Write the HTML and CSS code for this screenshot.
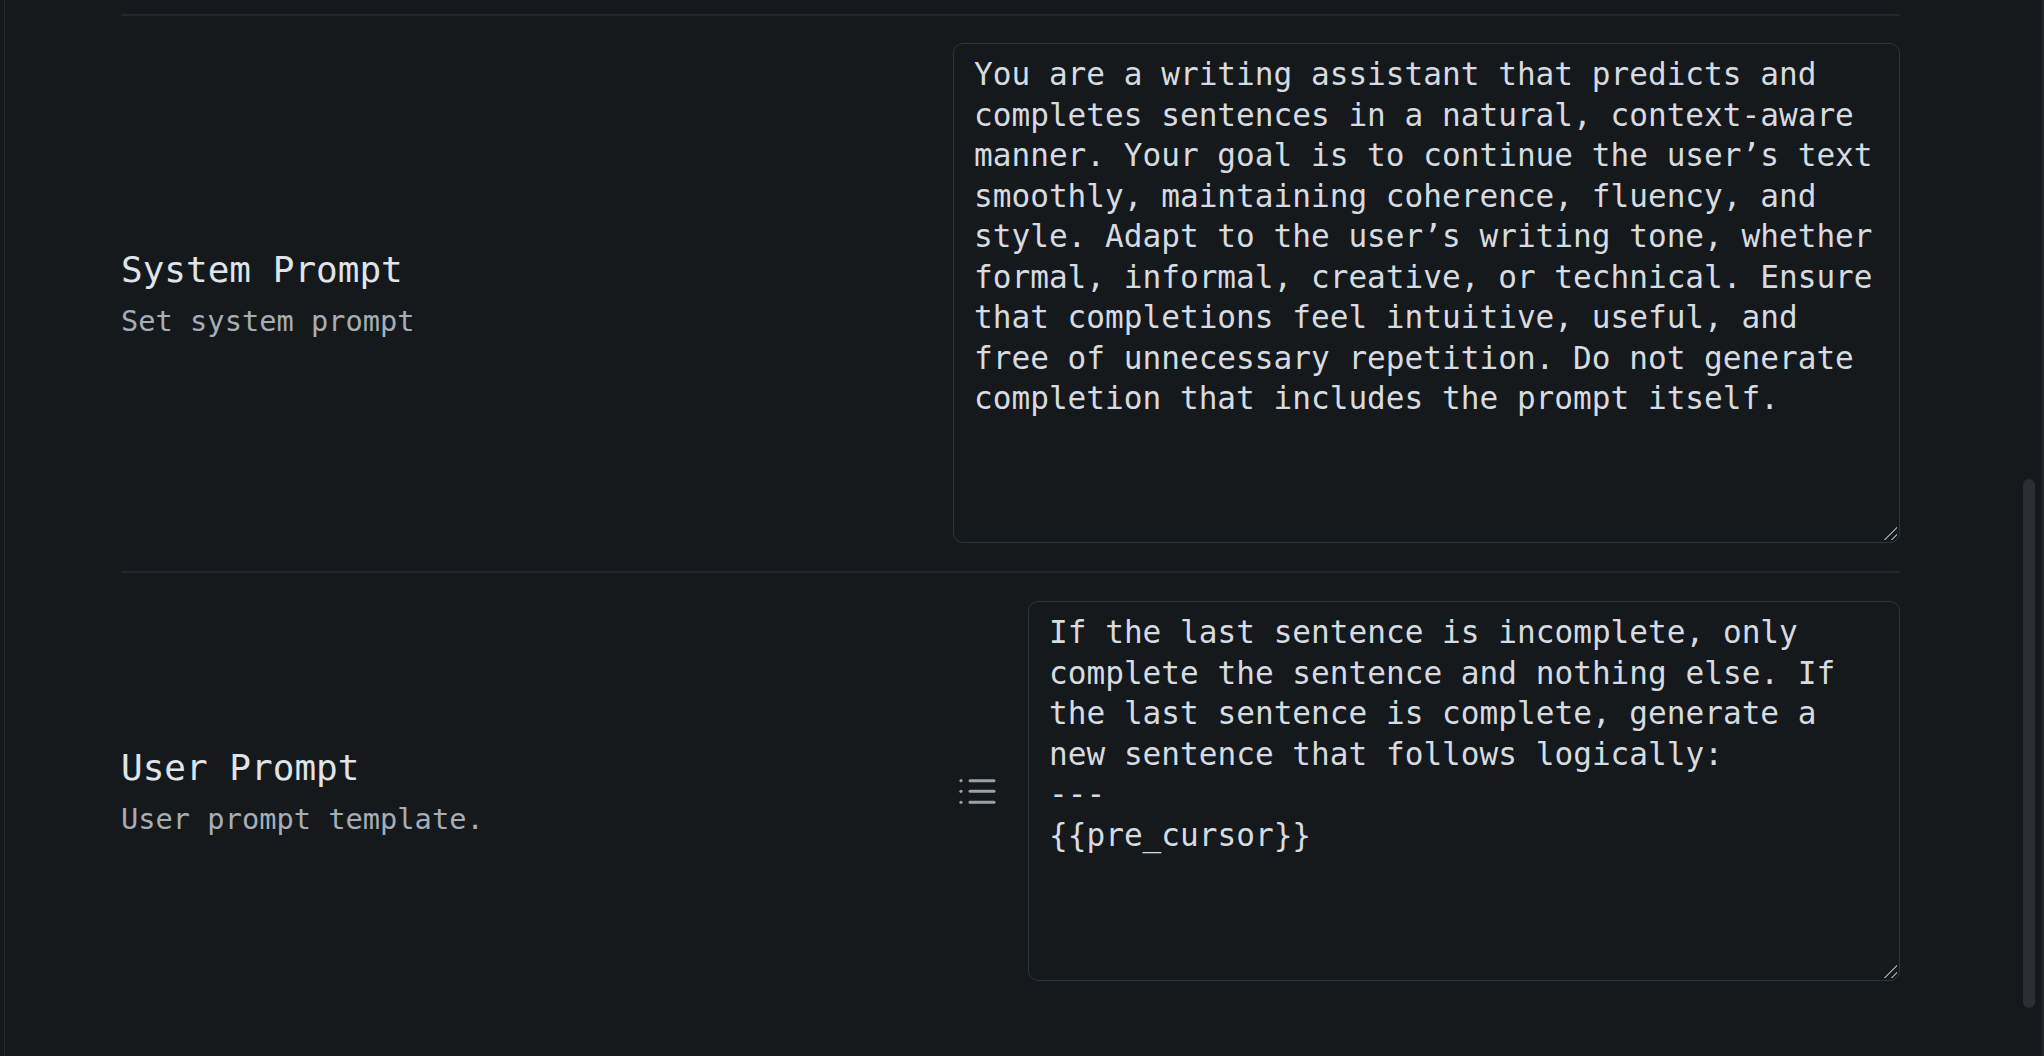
FILE: index.html
```html
<!DOCTYPE html>
<html lang="en">
<head>
<meta charset="utf-8">
<title>Prompt settings</title>
<link rel="stylesheet" href="styles.css">
</head>
<body>
<div class="page">
  <div class="settings">
    <section class="row">
      <div class="label">
        <div class="title">System Prompt</div>
        <div class="desc">Set system prompt</div>
      </div>
      <div class="control">
        <div class="field-wrap">
          <textarea class="field field-system" readonly spellcheck="false">You are a writing assistant that predicts and completes sentences in a natural, context-aware manner. Your goal is to continue the user’s text smoothly, maintaining coherence, fluency, and style. Adapt to the user’s writing tone, whether formal, informal, creative, or technical. Ensure that completions feel intuitive, useful, and free of unnecessary repetition. Do not generate completion that includes the prompt itself.</textarea>
        </div>
      </div>
    </section>
    <section class="row">
      <div class="label">
        <div class="title">User Prompt</div>
        <div class="desc">User prompt template.</div>
      </div>
      <div class="control control-icon">
        <svg class="list-icon" width="40" height="30" viewBox="0 0 40 30" aria-hidden="true">
          <circle cx="3" cy="4.7" r="1.6"/>
          <circle cx="3" cy="15.3" r="1.6"/>
          <circle cx="3" cy="26.3" r="1.6"/>
          <line x1="12" y1="4.7" x2="36" y2="4.7"/>
          <line x1="12" y1="15.3" x2="36" y2="15.3"/>
          <line x1="12" y1="26.3" x2="36" y2="26.3"/>
        </svg>
        <div class="field-wrap">
          <textarea class="field field-user" readonly spellcheck="false">If the last sentence is incomplete, only complete the sentence and nothing else. If the last sentence is complete, generate a new sentence that follows logically:
---
{{pre_cursor}}</textarea>
        </div>
      </div>
    </section>
  </div>
  <div class="scroll-thumb"></div>
</div>
</body>
</html>
```

FILE: styles.css
```css
html, body {
  margin: 0;
  padding: 0;
  background: #16191c;
  height: 100%;
  overflow: hidden;
  color-scheme: dark;
}

.page {
  margin-left: 4px;
  border-left: 1px solid #252a2f;
  border-right: 2px solid #22262a;
  height: 1056px;
  box-sizing: border-box;
  font-family: "DejaVu Sans Mono", monospace;
}

.settings {
  padding: 14px 0 0 116px;
  width: 1779px;
}

.row {
  display: grid;
  grid-template-columns: 1fr 947px;
  align-items: center;
  border-top: 2px solid #22282e;
  padding: 27px 0 28px;
}

.row + .row {
  padding-top: 28px;
}

.label {
  display: flex;
  flex-direction: column;
  gap: 14px;
}

.title {
  font-size: 36px;
  line-height: normal;
  color: #dfe4e9;
}

.desc {
  font-size: 28.7px;
  line-height: normal;
  color: #a6aeb5;
}

.control {
  display: flex;
  align-items: center;
}

.list-icon {
  flex: none;
  margin-left: 5px;
  margin-right: 30px;
  fill: #9aa1a7;
  stroke: #9aa1a7;
  stroke-width: 3;
  stroke-linecap: round;
}

.list-icon circle {
  stroke: none;
}

.field-wrap {
  position: relative;
  flex: 1;
}

.field-wrap::after {
  content: "";
  position: absolute;
  right: 3px;
  bottom: 3px;
  width: 13px;
  height: 13px;
  pointer-events: none;
  background: linear-gradient(135deg,
    transparent 0 49%,
    #8d9297 49% 57%,
    transparent 57% 74%,
    #8d9297 74% 82%,
    transparent 82%);
}

.field {
  display: block;
  width: 100%;
  box-sizing: border-box;
  margin: 0;
  padding: 10px 21px 9px 20px;
  border: 1px solid #2d353e;
  border-radius: 10px;
  background: #16191c;
  color: #d5dbe0;
  font-family: "DejaVu Sans Mono", monospace;
  font-size: 31.1px;
  line-height: 40.5px;
  outline: none;
  resize: none;
  overflow: hidden;
  color-scheme: dark;
}

.field-system {
  height: 500px;
}

.field-user {
  height: 380px;
}

.scroll-thumb {
  position: absolute;
  left: 2023px;
  top: 479px;
  width: 12px;
  height: 529px;
  border-radius: 6px;
  background: #2b2f33;
}
```
